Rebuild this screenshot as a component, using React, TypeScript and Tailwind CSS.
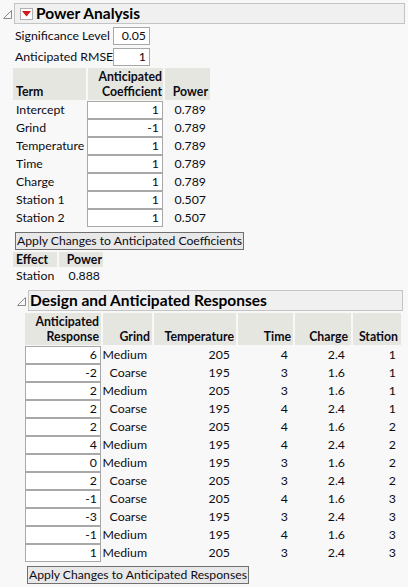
import React from "react";

const font = { fontFamily: "Lato, 'Liberation Sans', sans-serif" };

function Tri() {
  return (
    <svg width="9" height="9" viewBox="0 0 9 9" className="shrink-0">
      <path d="M8.5 0.5 L8.5 8.5 L0.5 8.5 Z" fill="none" stroke="#8a8a8a" strokeWidth="1" />
    </svg>
  );
}

function RedMenu() {
  return (
    <div className="w-[13px] h-[12px] border border-[#b0b0b0] bg-white flex items-center justify-center shrink-0">
      <svg width="9" height="6" viewBox="0 0 9 6">
        <path d="M0 0 L9 0 L4.5 5.5 Z" fill="#d11a1a" />
      </svg>
    </div>
  );
}

function Input({ v, w }: { v: string; w: string }) {
  return (
    <div className={`${w} shrink-0 h-[18px] bg-white border border-[#a8a8a8] text-right pr-[3px] leading-[16px]`}>{v}</div>
  );
}

const terms = [
  ["Intercept", "1", "0.789"],
  ["Grind", "-1", "0.789"],
  ["Temperature", "1", "0.789"],
  ["Time", "1", "0.789"],
  ["Charge", "1", "0.789"],
  ["Station 1", "1", "0.507"],
  ["Station 2", "1", "0.507"],
];

const design = [
  ["6", "Medium", "205", "4", "2.4", "1"],
  ["-2", "Coarse", "195", "3", "1.6", "1"],
  ["2", "Medium", "205", "3", "1.6", "1"],
  ["2", "Coarse", "195", "4", "2.4", "1"],
  ["2", "Coarse", "205", "4", "1.6", "2"],
  ["4", "Medium", "195", "4", "2.4", "2"],
  ["0", "Medium", "195", "3", "1.6", "2"],
  ["2", "Coarse", "205", "3", "2.4", "2"],
  ["-1", "Coarse", "205", "4", "1.6", "3"],
  ["-3", "Coarse", "195", "3", "2.4", "3"],
  ["-1", "Medium", "195", "4", "1.6", "3"],
  ["1", "Medium", "205", "3", "2.4", "3"],
];

export default function App() {
  return (
    <div style={font} className="w-[408px] h-[587px] bg-[#f8f8f8] text-[12.3px] text-[#0c0c14] overflow-hidden whitespace-nowrap">
      {/* Power Analysis header */}
      <div className="flex items-center pt-[3px] pl-[3px]">
        <div className="w-[11px] flex items-center mt-[2px]"><Tri /></div>
        <div className="flex-1 mr-[3px] h-[21px] bg-[#f0f0f0] border border-[#c4c4c4] flex items-center pl-[5px] gap-[3px]">
          <RedMenu />
          <span className="font-bold text-[15.5px] text-black leading-none">Power Analysis</span>
        </div>
      </div>

      <div className="pl-[15px] pt-[3px] flex flex-col gap-[3px]">
        <div className="flex items-center h-[18px]">
          <span className="w-[98px] shrink-0">Significance Level</span>
          <Input v="0.05" w="w-[37px]" />
        </div>
        <div className="flex items-center h-[18px]">
          <span className="w-[98px] shrink-0">Anticipated RMSE</span>
          <Input v="1" w="w-[37px]" />
        </div>
      </div>

      {/* Term table */}
      <div className="pl-[13px] pt-[2px]">
        <div className="flex gap-[2px] h-[32px]">
          <div className="w-[73px] bg-[#e6e6e1] font-bold flex items-end pl-[3px] pb-[1px] leading-[15px]">Term</div>
          <div className="w-[75px] bg-[#e6e6e1] font-bold flex flex-col items-end justify-end pr-[1px] pb-[1px] leading-[15px]">
            <span>Anticipated</span>
            <span>Coefficient</span>
          </div>
          <div className="w-[45px] bg-[#e6e6e1] font-bold flex items-end justify-end pr-[2px] pb-[1px] leading-[15px]">Power</div>
        </div>
        <div className="flex flex-col pt-[1px]">
          {terms.map((t) => (
            <div key={t[0]} className="flex h-[18px] items-center">
              <div className="w-[74px] shrink-0 pl-[3px]">{t[0]}</div>
              <Input v={t[1]} w="w-[76px]" />
              <div className="w-[43px] shrink-0 text-right">{t[2]}</div>
            </div>
          ))}
        </div>
        <div className="pt-[5px] pl-[2px]">
          <div className="inline-block h-[18px] bg-[#e8e8e8] border border-[#707070] px-[1px] leading-[16px] text-[12.2px]">
            Apply Changes to Anticipated Coefficients
          </div>
        </div>
        <div className="flex gap-[2px] h-[15px] mt-[2px]">
          <div className="w-[44px] bg-[#e6e6e1] font-bold pl-[3px] leading-[15px]">Effect</div>
          <div className="w-[44px] bg-[#e6e6e1] font-bold text-right pr-[1px] leading-[15px]">Power</div>
        </div>
        <div className="flex h-[18px] items-center">
          <div className="w-[46px] shrink-0 pl-[3px]">Station</div>
          <div className="w-[41px] shrink-0 text-right">0.888</div>
        </div>
      </div>

      {/* Design header */}
      <div className="flex items-center pt-[5px] pl-[17px]">
        <div className="w-[11px] flex items-center mt-[2px]"><Tri /></div>
        <div className="flex-1 mr-[5px] h-[21px] bg-[#f0f0f0] border border-[#c4c4c4] flex items-center pl-[1px]">
          <span className="font-bold text-[15.5px] text-black leading-none">Design and Anticipated Responses</span>
        </div>
      </div>

      <div className="pl-[25px] pt-[2px]">
        <div className="flex gap-[2px] h-[32px] font-bold leading-[15px]">
          <div className="w-[76px] bg-[#e6e6e1] flex flex-col items-end justify-end pr-[2px] pb-[1px]">
            <span>Anticipated</span>
            <span>Response</span>
          </div>
          <div className="w-[49px] bg-[#e6e6e1] flex items-end justify-end pr-[2px] pb-[1px]">Grind</div>
          <div className="w-[82px] bg-[#e6e6e1] flex items-end justify-end pr-[2px] pb-[1px]">Temperature</div>
          <div className="w-[55px] bg-[#e6e6e1] flex items-end justify-end pr-[2px] pb-[1px]">Time</div>
          <div className="w-[56px] bg-[#e6e6e1] flex items-end justify-end pr-[3px] pb-[1px]">Charge</div>
          <div className="w-[48px] bg-[#e6e6e1] flex items-end justify-end pr-[3px] pb-[1px]">Station</div>
        </div>
        <div className="flex flex-col pt-[1px]">
          {design.map((r, i) => (
            <div key={i} className="flex h-[18px] items-center">
              <Input v={r[0]} w="w-[76px]" />
              <div className="w-[49px] shrink-0 text-right pr-[3px]">{r[1]}</div>
              <div className="w-[84px] shrink-0 text-right pr-[4px]">{r[2]}</div>
              <div className="w-[57px] shrink-0 text-right pr-[3px]">{r[3]}</div>
              <div className="w-[58px] shrink-0 text-right pr-[4px]">{r[4]}</div>
              <div className="w-[50px] shrink-0 text-right pr-[3px]">{r[5]}</div>
            </div>
          ))}
        </div>
        <div className="pt-[4px] pl-[2px]">
          <div className="inline-block h-[18px] bg-[#e8e8e8] border border-[#707070] px-[1px] leading-[16px] text-[12.2px]">
            Apply Changes to Anticipated Responses
          </div>
        </div>
      </div>
    </div>
  );
}
